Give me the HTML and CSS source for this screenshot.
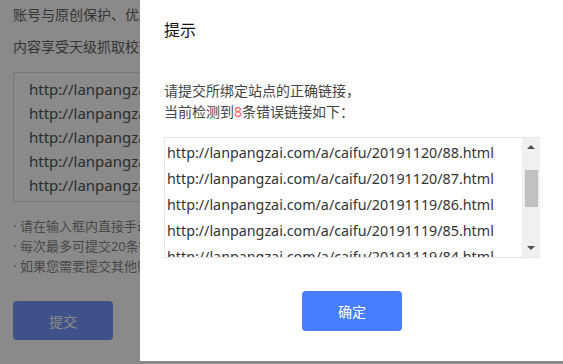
FILE: index.html
```html
<!DOCTYPE html>
<html>
<head>
<meta charset="UTF-8">
<title>提交链接</title>
<link rel="stylesheet" href="styles.css">
</head>
<body>
	<div class="page">
		<p class="intro">账号与原创保护、优质内容优先展现</p>
		<p class="intro">内容享受天级抓取校验及收录</p>
		<div class="links">
			<div>http://lanpangzai.com/a/caifu/20191120/88.html</div>
			<div>http://lanpangzai.com/a/caifu/20191120/87.html</div>
			<div>http://lanpangzai.com/a/caifu/20191119/86.html</div>
			<div>http://lanpangzai.com/a/caifu/20191119/85.html</div>
			<div>http://lanpangzai.com/a/caifu/20191119/84.html</div>
		</div>
		<ul class="tips">
			<li>请在输入框内直接手动输入链接</li>
			<li>每次最多可提交20条链接</li>
			<li>如果您需要提交其他账号的链接</li>
		</ul>
		<button class="submit">提交</button>
	</div>

	<!-- 弹窗 -->
	<div class="mask"></div>
	<div class="dialog">
		<div class="dialog-title">提示</div>
		<p class="dialog-text">请提交所绑定站点的正确链接，<br>当前检测到<span class="num">8</span>条错误链接如下：</p>
		<div class="url-box">
			<div class="url-list">
				<div>http://lanpangzai.com/a/caifu/20191120/88.html</div>
				<div>http://lanpangzai.com/a/caifu/20191120/87.html</div>
				<div>http://lanpangzai.com/a/caifu/20191119/86.html</div>
				<div>http://lanpangzai.com/a/caifu/20191119/85.html</div>
				<div>http://lanpangzai.com/a/caifu/20191119/84.html</div>
			</div>
			<div class="scrollbar">
				<span class="arrow up"></span>
				<span class="thumb"></span>
				<span class="arrow down"></span>
			</div>
		</div>
		<div class="dialog-foot"><button class="ok">确定</button></div>
	</div>
</body>
</html>
```

FILE: styles.css
```css
body{margin: 0; background: #fff; font-family: "Noto Sans", "Noto Sans CJK SC", sans-serif; color: #666;}
p{margin: 0;}
.page{padding: 4px 13px; height: 364px; box-sizing: border-box; overflow: hidden;}
.intro{font-size: 14px; line-height: 22px; margin-bottom: 10px; white-space: nowrap;}
.links{width: 500px; border: 1px solid #ddd; margin-top: 14px; padding: 4px 15px; font-size: 15px; line-height: 24px; color: #555; white-space: nowrap;}
.tips{list-style: none; margin: 14px 0 0; padding: 0; font-size: 13px; line-height: 20px; color: #888;}
.tips li::before{content: "· ";}
.submit{margin-top: 25px; width: 100px; height: 39px; border: 0; border-radius: 4px; background: #7396fb; color: #fff; font-size: 14px; font-family: inherit;}

.mask{position: fixed; left: 0; top: 0; right: 0; bottom: 0; background: rgba(0,0,0,.46);}
.dialog{position: absolute; left: 140px; top: 0; width: 424px; height: 361px; background: #fff; padding: 0 24px; box-sizing: border-box; color: #333;}
.dialog-title{margin-top: 19px; font-size: 16px; line-height: 22px; color: #111;}
.dialog-text{margin-top: 39px; font-size: 14px; line-height: 21px; color: #444;}
.num{color: #ff5b5b;}
.url-box{display: flex; margin-top: 15px; height: 119px; border: 1px solid #e6e6e6; border-right: 0; overflow: hidden;}
.url-list{flex: 1; padding: 2px 0 0 2px; font-size: 14.3px; line-height: 26px; color: #333; white-space: nowrap; overflow: hidden;}
.scrollbar{width: 18px; background: #f0f0f0; display: flex; flex-direction: column; align-items: center;}
.arrow{width: 0; height: 0; border-left: 4px solid transparent; border-right: 4px solid transparent;}
.arrow.up{margin-top: 7px; border-bottom: 4px solid #505050;}
.arrow.down{margin-top: auto; margin-bottom: 7px; border-top: 4px solid #505050;}
.thumb{width: 13px; height: 37px; background: #c1c1c1; margin-top: 21px;}
.dialog-foot{display: flex; justify-content: center; margin-top: 33px;}
.ok{width: 100px; height: 40px; border: 0; border-radius: 4px; background: #477dff; color: #fff; font-size: 14px; font-family: inherit;}
```
